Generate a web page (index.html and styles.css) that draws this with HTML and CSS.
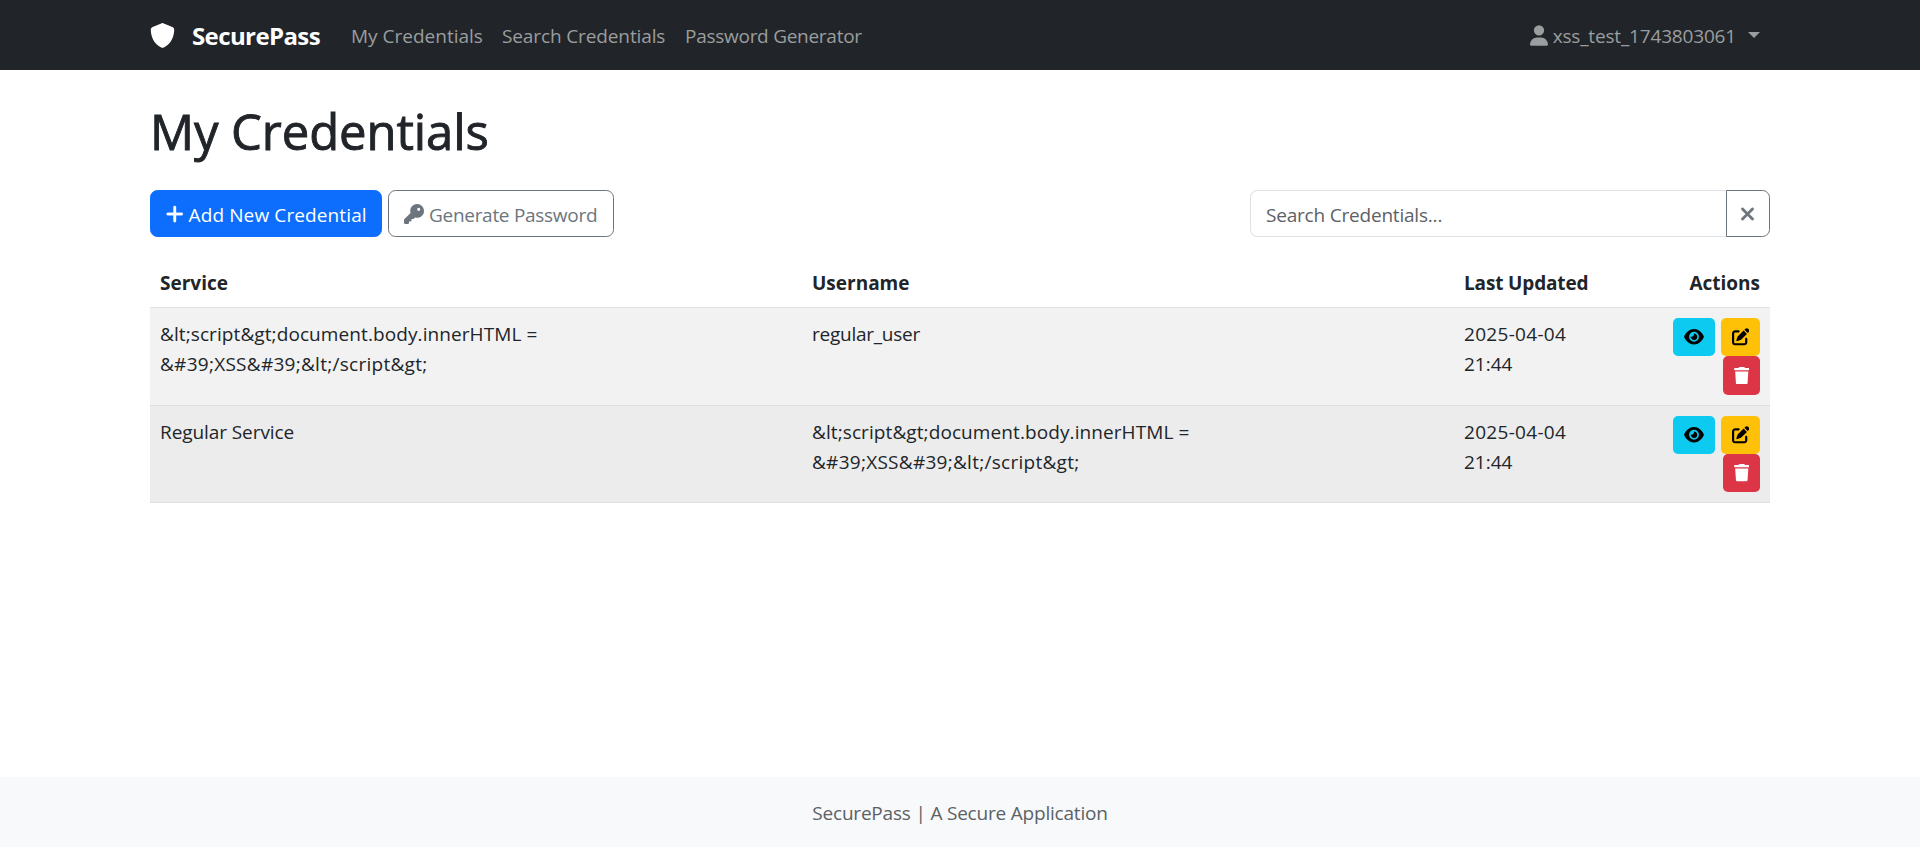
FILE: index.html
```html
<!DOCTYPE html>
<html lang="en">
<head>
<meta charset="utf-8">
<title>My Credentials - SecurePass</title>
<link rel="stylesheet" href="styles.css">
</head>
<body>
<svg class="sprite" aria-hidden="true">
  <symbol id="shield" viewBox="0 0 512 512"><path d="M256 0c4.600 0 9.200 1 13.400 2.900L457.700 82.800c22 9.300 38.400 31 38.300 57.200c-.5 99.200-41.300 280.700-213.600 363.200c-16.700 8-36.100 8-52.800 0C57.300 420.700 16.500 239.200 16 140c-.1-26.200 16.300-47.900 38.300-57.200L242.700 2.900C246.800 1 251.400 0 256 0z"/></symbol>
  <symbol id="user" viewBox="0 0 448 512"><path d="M224 256A128 128 0 1 0 224 0a128 128 0 1 0 0 256zm-45.7 48C79.8 304 0 383.8 0 482.3C0 498.7 13.3 512 29.7 512l388.6 0c16.4 0 29.7-13.3 29.7-29.7C448 383.8 368.2 304 269.7 304l-91.4 0z"/></symbol>
  <symbol id="plus" viewBox="0 0 448 512"><path d="M256 80c0-17.7-14.3-32-32-32s-32 14.3-32 32l0 144L48 224c-17.7 0-32 14.3-32 32s14.3 32 32 32l144 0 0 144c0 17.7 14.3 32 32 32s32-14.3 32-32l0-144 144 0c17.7 0 32-14.3 32-32s-14.3-32-32-32l-144 0 0-144z"/></symbol>
  <symbol id="key" viewBox="0 0 512 512"><path d="M336 352c97.2 0 176-78.8 176-176S433.2 0 336 0S160 78.8 160 176c0 18.7 2.9 36.8 8.3 53.7L7 391c-4.5 4.5-7 10.6-7 17l0 80c0 13.3 10.7 24 24 24l80 0c13.3 0 24-10.7 24-24l0-40 40 0c13.3 0 24-10.7 24-24l0-40 40 0c6.4 0 12.5-2.5 17-7l33.3-33.3c16.9 5.4 35 8.3 53.7 8.3zM376 96a40 40 0 1 1 0 80 40 40 0 1 1 0-80z"/></symbol>
  <symbol id="xmark" viewBox="0 0 384 512"><path d="M342.6 150.6c12.5-12.5 12.5-32.8 0-45.3s-32.8-12.5-45.3 0L192 210.7 86.6 105.4c-12.5-12.5-32.8-12.5-45.3 0s-12.5 32.8 0 45.3L146.7 256 41.4 361.4c-12.5 12.5-12.5 32.8 0 45.3s32.8 12.5 45.3 0L192 301.3 297.4 406.6c12.5 12.5 32.8 12.5 45.3 0s12.5-32.8 0-45.3L237.3 256 342.6 150.6z"/></symbol>
  <symbol id="eye" viewBox="0 0 576 512"><path d="M288 32c-80.8 0-145.5 36.8-192.6 80.6C48.6 156 17.3 208 2.5 243.7c-3.3 7.9-3.3 16.7 0 24.6C17.3 304 48.6 356 95.4 399.4C142.5 443.2 207.2 480 288 480s145.5-36.8 192.6-80.6c46.8-43.5 78.1-95.4 93-131.1c3.3-7.9 3.3-16.7 0-24.6c-14.9-35.7-46.2-87.7-93-131.1C433.5 68.8 368.8 32 288 32zM144 256a144 144 0 1 1 288 0 144 144 0 1 1 -288 0zm144-64c0 35.3-28.7 64-64 64c-7.1 0-13.9-1.2-20.3-3.3c-5.5-1.8-11.9 1.6-11.7 7.4c.3 6.9 1.3 13.8 3.2 20.7c13.7 51.2 66.4 81.6 117.6 67.9s81.6-66.4 67.9-117.6c-11.1-41.5-47.8-69.4-88.6-71.1c-5.8-.2-9.2 6.1-7.4 11.7c2.1 6.4 3.3 13.2 3.3 20.3z"/></symbol>
  <symbol id="edit" viewBox="0 0 512 512"><path d="M471.6 21.7c-21.9-21.9-57.3-21.9-79.2 0L362.3 51.7l97.9 97.9 30.1-30.1c21.9-21.9 21.9-57.3 0-79.2L471.6 21.7zm-299.2 220c-6.1 6.1-10.8 13.6-13.5 21.9l-29.6 88.8c-2.9 8.6-.6 18.1 5.8 24.6s15.9 8.7 24.6 5.8l88.8-29.6c8.2-2.7 15.7-7.4 21.9-13.5L437.7 172.3 339.7 74.3 172.4 241.7zM96 64C43 64 0 107 0 160L0 416c0 53 43 96 96 96l256 0c53 0 96-43 96-96l0-96c0-17.7-14.3-32-32-32s-32 14.3-32 32l0 96c0 17.7-14.3 32-32 32L96 448c-17.7 0-32-14.3-32-32l0-256c0-17.7 14.3-32 32-32l96 0c17.7 0 32-14.3 32-32s-14.3-32-32-32L96 64z"/></symbol>
  <symbol id="trash" viewBox="0 0 448 512"><path d="M135.2 17.7L128 32 32 32C14.3 32 0 46.3 0 64S14.3 96 32 96l384 0c17.7 0 32-14.3 32-32s-14.3-32-32-32l-96 0-7.2-14.3C307.4 6.8 296.3 0 284.2 0L163.8 0c-12.1 0-23.2 6.8-28.6 17.7zM416 128L32 128 53.2 467c1.6 25.3 22.6 45 47.9 45l245.8 0c25.3 0 46.3-19.7 47.9-45L416 128z"/></symbol>
</svg>

<header class="navbar">
  <div class="container navbar-inner">
    <a class="brand"><svg class="icon-shield"><use href="#shield"/></svg><span>SecurePass</span></a>
    <nav class="nav">
      <a class="nav-mine">My Credentials</a>
      <a class="nav-search">Search Credentials</a>
      <a class="nav-gen">Password Generator</a>
    </nav>
    <a class="account"><svg class="icon-user"><use href="#user"/></svg><span>xss_test_1743803061</span><i class="caret"></i></a>
  </div>
</header>

<main class="container main">
  <h1 class="title">My Credentials</h1>
  <div class="toolbar">
    <a class="btn btn-primary"><svg class="icon-plus"><use href="#plus"/></svg><span>Add New Credential</span></a>
    <a class="btn btn-outline"><svg class="icon-key"><use href="#key"/></svg><span>Generate Password</span></a>
    <div class="search">
      <div class="search-field"><span>Search Credentials...</span></div>
      <a class="search-clear"><svg class="icon-x"><use href="#xmark"/></svg></a>
    </div>
  </div>

  <div class="table">
    <div class="row head">
      <div class="cell th-service"><span>Service</span></div>
      <div class="cell th-user"><span>Username</span></div>
      <div class="cell th-date"><span>Last Updated</span></div>
      <div class="cell th-actions"><span>Actions</span></div>
    </div>
    <div class="row odd">
      <div class="cell"><span class="payload">&amp;lt;script&amp;gt;document.body.innerHTML =</span><br><span class="payload-end">&amp;#39;XSS&amp;#39;&amp;lt;/script&amp;gt;</span></div>
      <div class="cell"><span class="regular-user">regular_user</span></div>
      <div class="cell"><span class="date">2025-04-04</span><br><span class="time">21:44</span></div>
      <div class="cell actions">
        <a class="act view"><svg><use href="#eye"/></svg></a>
        <a class="act edit"><svg><use href="#edit"/></svg></a>
        <a class="act delete"><svg><use href="#trash"/></svg></a>
      </div>
    </div>
    <div class="row even">
      <div class="cell"><span class="regular-service">Regular Service</span></div>
      <div class="cell"><span class="payload">&amp;lt;script&amp;gt;document.body.innerHTML =</span><br><span class="payload-end">&amp;#39;XSS&amp;#39;&amp;lt;/script&amp;gt;</span></div>
      <div class="cell"><span class="date">2025-04-04</span><br><span class="time">21:44</span></div>
      <div class="cell actions">
        <a class="act view"><svg><use href="#eye"/></svg></a>
        <a class="act edit"><svg><use href="#edit"/></svg></a>
        <a class="act delete"><svg><use href="#trash"/></svg></a>
      </div>
    </div>
  </div>
</main>

<footer class="footer"><span>SecurePass | A Secure Application</span></footer>
</body>
</html>
```
FILE: styles.css
```css
* { box-sizing: border-box; }
body {
  margin: 0;
  height: 847px;
  display: flex;
  flex-direction: column;
  font-family: "Open Sans", "Noto Sans", sans-serif;
  font-size: 19px;
  line-height: 30px;
  color: #212529;
  background: #fff;
}
svg { display: block; fill: currentColor; flex: none; }
span, a { white-space: nowrap; }
.sprite { display: none; }
.container { width: 1620px; margin: 0 auto; }

.navbar { height: 70px; background: #212529; }
.navbar-inner { height: 70px; display: flex; align-items: center; }
.brand { display: flex; align-items: center; gap: 17px; width: 201px; color: #fff; font-size: 24px; font-weight: 700; letter-spacing: -0.6px; }
.brand span, .account span, .nav a, .btn span, .search-field span, .footer span { padding-top: 2px; }
.icon-shield { width: 25px; height: 25px; }
.nav { display: flex; flex: 1; gap: 20px; color: #9b9d9e; }
.nav-mine { width: 131px; }
.nav-search { width: 163px; letter-spacing: -0.12px; }
.nav-gen { letter-spacing: -0.27px; }
.account { display: flex; align-items: center; color: #9b9d9e; padding-right: 10px; letter-spacing: -0.17px; }
.icon-user { width: 18px; height: 21px; margin-right: 5px; }
.caret { margin-left: 12px; border: 6px solid transparent; border-top-color: currentColor; border-bottom: 0; }

.main { flex: 1; padding-top: 31px; }
.title { margin: 0 0 29px; font-size: 49px; line-height: 60px; font-weight: 500; letter-spacing: -0.1px; -webkit-text-stroke: 0.9px currentColor; }

.toolbar { display: flex; gap: 6px; height: 47px; }
.btn { display: flex; align-items: center; padding: 0 15px; border-radius: 7.5px; border: 1px solid; }
.btn-primary { width: 232px; color: #fff; background: #0d6efd; border-color: #0d6efd; letter-spacing: 0.12px; }
.btn-outline { width: 226px; color: #6c757d; letter-spacing: -0.29px; }
.icon-plus { width: 17.5px; height: 20px; margin-right: 5px; stroke: currentColor; stroke-width: 10px; }
.icon-key { width: 20px; height: 20px; margin-right: 5px; }
.search { display: flex; width: 520px; margin-left: auto; }
.search-field { flex: 1; display: flex; align-items: center; padding-left: 15px; color: #5c6166; border: 1px solid #dee2e6; border-right: 0; border-radius: 7.5px 0 0 7.5px; letter-spacing: -0.2px; }
.search-clear { width: 44px; display: flex; align-items: center; justify-content: center; padding-right: 2px; color: #6c757d; border: 1px solid; border-radius: 0 7.5px 7.5px 0; }
.icon-x { width: 15px; height: 20px; stroke: currentColor; stroke-width: 10px; }

.table { margin-top: 20px; }
.row { display: grid; grid-template-columns: 652px 652px 196px 120px; border-bottom: 1px solid #dee2e6; }
.cell { padding: 11px 10px 8px; }
.head { height: 51px; font-weight: 700; }
.th-date { letter-spacing: -0.15px; }
.th-actions { text-align: right; }
.odd { height: 98px; background: #f2f2f2; }
.even { height: 97px; background: #ececec; }
.odd, .even { border-color: #dedfe0; }
.payload { letter-spacing: 0.09px; }
.payload-end { letter-spacing: 0.27px; }
.regular-user { letter-spacing: -0.25px; }
.regular-service { letter-spacing: -0.08px; }
.date { letter-spacing: 0.3px; }
.actions { padding: 10px 10px 0 18px; display: flex; flex-wrap: wrap; justify-content: flex-end; align-content: flex-start; column-gap: 6px; }
.act { height: 38px; display: flex; align-items: center; justify-content: center; border-radius: 5px; }
.odd .delete { height: 39px; }
.act svg { height: 17.5px; }
.view { width: 42px; background: #0dcaf0; color: #000; }
.view svg { width: 20px; }
.edit { width: 39px; background: #ffc107; color: #000; }
.edit svg { width: 17.5px; }
.delete { width: 37px; background: #dc3545; color: #fff; }
.delete svg { width: 15.5px; }

.footer { height: 70px; display: flex; align-items: center; justify-content: center; background: #f8f9fa; color: #5c6166; letter-spacing: -0.2px; }
```
